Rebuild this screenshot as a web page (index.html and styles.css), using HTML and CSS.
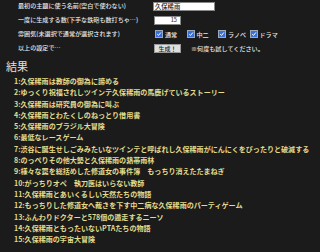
FILE: index.html
```html
<!DOCTYPE html>
<html lang="ja">
<head>
<meta charset="utf-8">
<title>久保稀雨</title>
<link rel="stylesheet" href="styles.css">
</head>
<body>
<div class="form">
  <div class="label">最初の主題に使う名前(空白で使わない)</div>
  <div class="field"><span class="text-input">久保稀雨</span></div>
  <div class="label">一度に生成する数(下手な鉄砲も数打ちゃ…)</div>
  <div class="field"><span class="num-input">15</span></div>
  <div class="label">雰囲気(未選択で通常が選択されます)</div>
  <div class="field checks">
    <span class="check"><svg class="box" viewBox="0 0 6 6"><rect width="6" height="6" fill="#3b6fd8"/><path d="M1.2 3.1 L2.5 4.4 L4.9 1.5" stroke="#fff" stroke-width="1" fill="none"/></svg>通常</span>
    <span class="check"><svg class="box" viewBox="0 0 6 6"><rect width="6" height="6" fill="#3b6fd8"/><path d="M1.2 3.1 L2.5 4.4 L4.9 1.5" stroke="#fff" stroke-width="1" fill="none"/></svg>中二</span>
    <span class="check"><svg class="box" viewBox="0 0 6 6"><rect width="6" height="6" fill="#3b6fd8"/><path d="M1.2 3.1 L2.5 4.4 L4.9 1.5" stroke="#fff" stroke-width="1" fill="none"/></svg>ラノベ</span>
    <span class="check"><svg class="box" viewBox="0 0 6 6"><rect width="6" height="6" fill="#3b6fd8"/><path d="M1.2 3.1 L2.5 4.4 L4.9 1.5" stroke="#fff" stroke-width="1" fill="none"/></svg>ドラマ</span>
  </div>
  <div class="label">以上の設定で…</div>
  <div class="field"><span class="button">生成！</span><span class="note">※何度も試してください。</span></div>
</div>
<div class="results">
  <h2 class="title">結果</h2>
  <ol class="list">
    <li>1:久保稀雨は教師の御為に諦める</li>
    <li>2:ゆっくり祝福されしツインテ久保稀雨の馬鹿げているストーリー</li>
    <li>3:久保稀雨は研究員の御為に叫ぶ</li>
    <li>4:久保稀雨とわたくしのねっとり借用書</li>
    <li>5:久保稀雨のブラジル大冒険</li>
    <li>6:最低なレースゲーム</li>
    <li>7:渋谷に誕生せしごみみたいなツインテと呼ばれし久保稀雨がにんにくをぴったりと破滅する</li>
    <li>8:のっぺりその他大勢と久保稀雨の熱帯雨林</li>
    <li>9:様々な罠を総括めした修道女の事件簿　もっちり消えたたまねぎ</li>
    <li>10:がっちりオペ　執刀医はいらない教師</li>
    <li>11:久保稀雨とあいくるしい天然たちの物語</li>
    <li>12:もっちりした修道女へ裁きを下す中二病な久保稀雨のパーティゲーム</li>
    <li>13:ふんわりドクターと578個の遁走するニーソ</li>
    <li>14:久保稀雨ともったいないPTAたちの物語</li>
    <li>15:久保稀雨の宇宙大冒険</li>
  </ol>
</div>
</body>
</html>
```
FILE: styles.css
```css
html, body {
  margin: 0;
  padding: 0;
  background: #1b1b1b;
  font-family: "Noto Sans CJK JP", "Noto Sans", sans-serif;
}
.form {
  display: grid;
  grid-template-columns: 135px auto;
  grid-auto-rows: 14px;
  align-items: center;
  padding-left: 18px;
  margin-top: -1px;
  color: #e6e6e6;
  font-size: 6.1px;
  font-weight: 500;
}
.label {
  white-space: nowrap;
  line-height: 14px;
}
.field {
  display: flex;
  align-items: center;
  white-space: nowrap;
}
.text-input {
  box-sizing: border-box;
  width: 62px;
  height: 9px;
  background: #fff;
  border: 1px solid #888;
  color: #222;
  font-size: 6.3px;
  line-height: 7px;
  padding-left: 1px;
}
.num-input {
  box-sizing: border-box;
  width: 27px;
  height: 9px;
  margin-left: 1px;
  background: #fff;
  border: 1px solid #888;
  color: #444;
  font-size: 5.5px;
  line-height: 7px;
  text-align: right;
  padding-right: 3px;
}
.checks {
  gap: 0;
  padding-left: 3px;
}
.check {
  display: flex;
  align-items: center;
  width: 31.5px;
}
.box {
  width: 6px;
  height: 6px;
  margin-right: 3px;
  outline: 0.5px solid #9ab;
}
.button {
  box-sizing: border-box;
  width: 27px;
  height: 9px;
  margin-left: 1px;
  background: #dedede;
  border: 1px solid #999;
  color: #222;
  font-size: 6px;
  line-height: 7px;
  text-align: center;
}
.note {
  margin-left: 10px;
}
.results {
  padding-top: 4px;
}
.title {
  margin: 0 0 3px 6px;
  font-size: 11px;
  line-height: 14px;
  font-weight: normal;
  color: #e0e0e0;
}
.list {
  list-style: none;
  margin: 0;
  padding: 0 0 0 14px;
  color: #e4dc8c;
  font-size: 7.05px;
  font-weight: bold;
  line-height: 11.3px;
  white-space: nowrap;
}
```
